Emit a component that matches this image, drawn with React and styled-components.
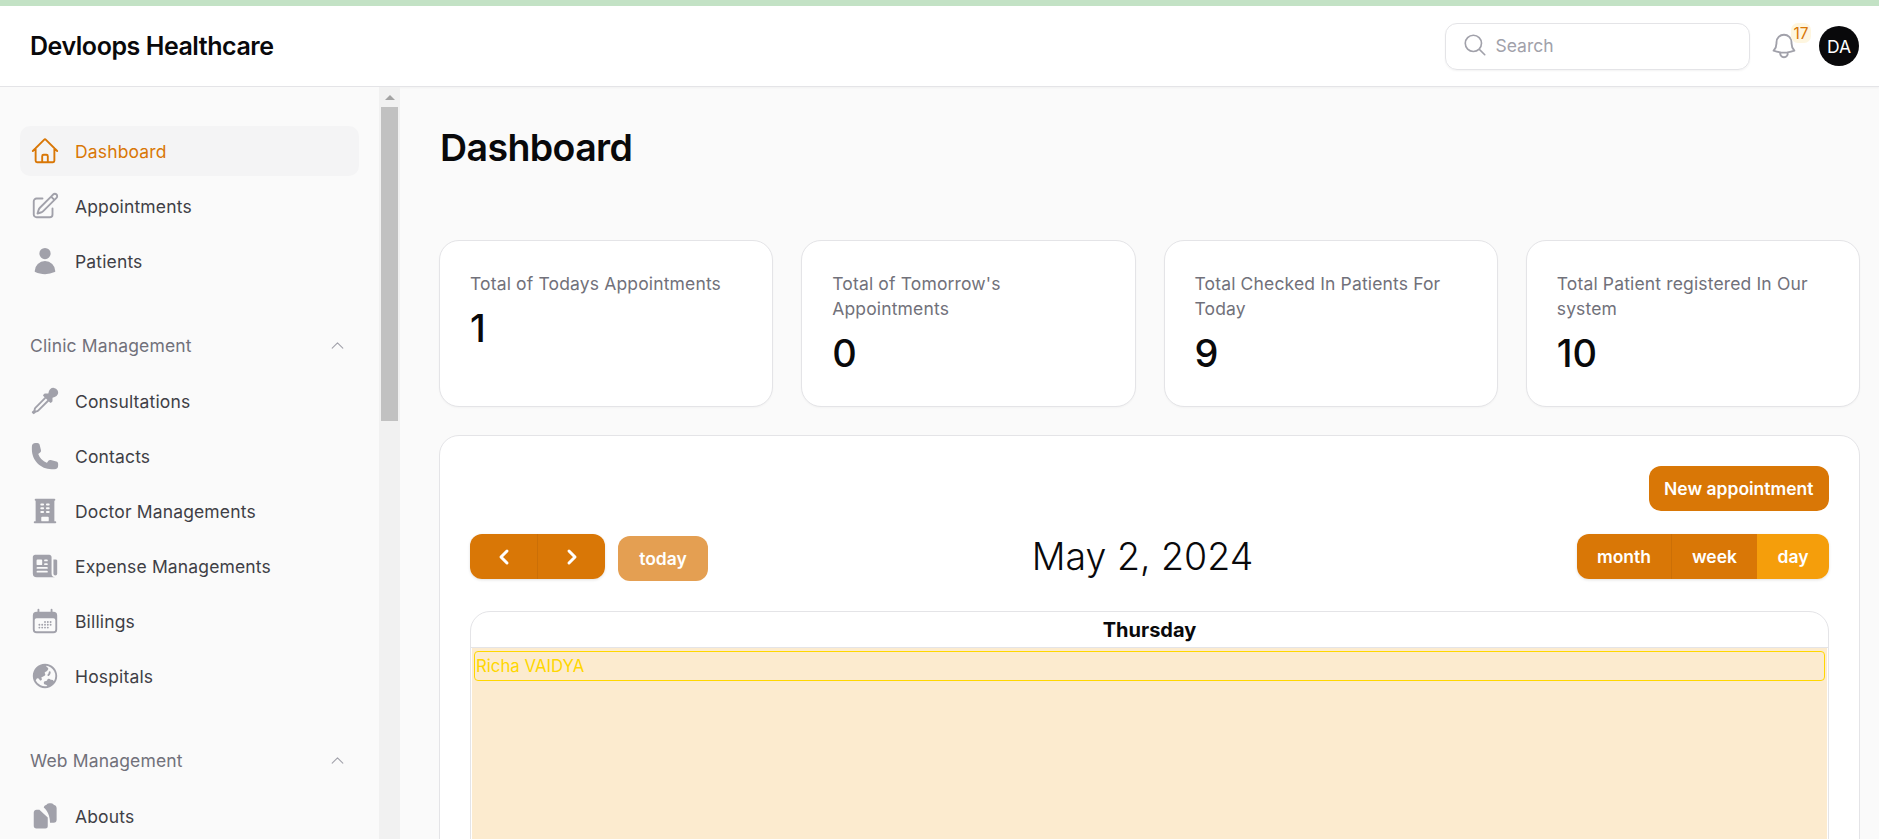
import React from "react";
import styled, { createGlobalStyle } from "styled-components";
import { ChevronLeft, ChevronRight } from "lucide-react";
import {
  HiOutlineHome,
  HiOutlinePencilSquare,
  HiUser,
  HiEyeDropper,
  HiPhone,
  HiBuildingOffice,
  HiNewspaper,
  HiCalendarDays,
  HiGlobeAsiaAustralia,
  HiOutlineChevronUp,
  HiOutlineBell,
  HiOutlineMagnifyingGlass,
} from "react-icons/hi2";

const GlobalStyle = createGlobalStyle`
  * { box-sizing: border-box; }
  html, body { margin: 0; height: 100%; overflow: hidden; }
  body {
    font-family: Inter, "Liberation Sans", sans-serif;
    background: #fafafa;
    color: #09090b;
  }
`;

// Structure generale
const Page = styled.div`
  height: 100vh;
  display: flex;
  flex-direction: column;
`;

const TopStripe = styled.div`
  height: 6px;
  flex: none;
  background: #c3e2c5;
`;

const Header = styled.header`
  height: 81px;
  flex: none;
  display: flex;
  align-items: center;
  justify-content: space-between;
  padding: 0 20px 0 30px;
  background: #fff;
  border-bottom: 1px solid #e4e4e7;
  box-shadow: 0 1px 2px rgba(0, 0, 0, 0.04);
`;

const Brand = styled.div`
  font-size: 25px;
  font-weight: 600;
  letter-spacing: -0.45px;
`;

const HeaderRight = styled.div`
  display: flex;
  align-items: center;
`;

const SearchBox = styled.div`
  width: 305px;
  height: 47px;
  display: flex;
  align-items: center;
  gap: 8px;
  padding: 0 0 2px 16px;
  border: 1.5px solid #e4e4e7;
  border-radius: 12px;
  box-shadow: 0 1px 2px rgba(0, 0, 0, 0.05);
  color: #a1a1aa;
  font-size: 17.5px;
  svg { font-size: 26px; }
`;

const BellWrap = styled.div`
  position: relative;
  width: 30px;
  height: 30px;
  margin: 0 20px 0 19.5px;
  color: #a1a1aa;
  svg { font-size: 30px; display: block; }
`;

const Badge = styled.span`
  position: absolute;
  top: -8px;
  right: -12px;
  width: 20px;
  height: 20px;
  display: flex;
  align-items: center;
  justify-content: center;
  border-radius: 7px;
  background: #fef6e0;
  color: #d97706;
  font-size: 15.5px;
`;

const Avatar = styled.div`
  width: 40px;
  height: 40px;
  display: flex;
  align-items: center;
  justify-content: center;
  border-radius: 50%;
  background: #09090b;
  color: #fff;
  font-size: 17.5px;
`;

const Body = styled.div`
  flex: 1;
  min-height: 0;
  display: flex;
`;

// Barre laterale
const Sidebar = styled.aside`
  width: 400px;
  flex: none;
  display: flex;
  overflow: hidden;
  background: #fafafa;
`;

const ScrollTrack = styled.div`
  width: 21px;
  flex: none;
  display: flex;
  flex-direction: column;
  align-items: center;
  background: #f1f1f1;
`;

const ScrollArrow = styled.div`
  width: 100%;
  height: 20px;
  display: flex;
  align-items: center;
  justify-content: center;
  &::before {
    content: "";
    border-left: 5px solid transparent;
    border-right: 5px solid transparent;
    border-bottom: 5px solid #a3a3a3;
  }
`;

const ScrollThumb = styled.div`
  width: 17px;
  height: 314px;
  background: #c1c1c1;
`;

const Nav = styled.nav`
  flex: 1;
  min-width: 0;
  padding: 39px 20px 0;
`;

const NavList = styled.div`
  display: flex;
  flex-direction: column;
  gap: 5px;
`;

const NavItem = styled.a`
  height: 50px;
  display: flex;
  align-items: center;
  gap: 15px;
  padding-left: 10px;
  border-radius: 10px;
  font-size: 17.5px;
  letter-spacing: 0.15px;
  color: ${(p) => (p.$active ? "#d97706" : "#3f3f46")};
  background: ${(p) => (p.$active ? "#f4f4f5" : "transparent")};
  svg {
    font-size: 30px;
    flex: none;
    color: ${(p) => (p.$active ? "#d97706" : "#a1a1aa")};
  }
`;

const SectionLabel = styled.div`
  height: 25px;
  margin: 47px 0 18px;
  display: flex;
  align-items: center;
  justify-content: space-between;
  padding: 0 13px 0 10px;
  font-size: 17.5px;
  letter-spacing: 0.15px;
  color: #71717a;
  svg { font-size: 17px; color: #a1a1aa; }
`;

// Contenu principal
const Main = styled.main`
  flex: 1;
  min-width: 0;
  overflow: hidden;
  padding: 38px 19px 0 39px;
`;

const Title = styled.h1`
  margin: 0 0 70px 1px;
  font-size: 37.5px;
  line-height: 45px;
  font-weight: 600;
  letter-spacing: -0.6px;
`;

const StatGrid = styled.div`
  display: grid;
  grid-template-columns: repeat(4, 1fr);
  gap: 28px;
  margin-bottom: 28px;
`;

const StatCard = styled.div`
  padding: 30px;
  background: #fff;
  border: 1px solid #e4e4e7;
  border-radius: 20px;
  box-shadow: 0 1px 2px rgba(0, 0, 0, 0.03);
`;

const StatLabel = styled.div`
  font-size: 17.5px;
  line-height: 25px;
  letter-spacing: 0.15px;
  color: #71717a;
`;

const StatValue = styled.div`
  margin-top: 10px;
  font-size: 38px;
  line-height: 45px;
  font-weight: 500;
  color: #09090b;
`;

const CalendarCard = styled.section`
  padding: 30px 30px 0;
  background: #fff;
  border: 1px solid #e4e4e7;
  border-radius: 20px;
`;

const CardActions = styled.div`
  display: flex;
  justify-content: flex-end;
  margin-bottom: 23px;
`;

const PrimaryButton = styled.button`
  height: 45px;
  padding: 0 15.5px;
  border: 0;
  border-radius: 12px;
  background: #d97706;
  color: #fff;
  font: 600 17.5px Inter, sans-serif;
`;

const Toolbar = styled.div`
  display: flex;
  align-items: flex-start;
  justify-content: space-between;
  margin-bottom: 30px;
`;

const ToolbarGroup = styled.div`
  display: flex;
  align-items: flex-start;
  gap: 13px;
`;

const ButtonGroup = styled.div`
  display: flex;
  height: 45px;
  border-radius: 12px;
  overflow: hidden;
  box-shadow: 0 1px 3px rgba(0, 0, 0, 0.12);
`;

const GroupButton = styled.button`
  width: ${(p) => p.$width}px;
  display: flex;
  align-items: center;
  justify-content: center;
  border: 0;
  border-left: ${(p) => (p.$divider ? "1px solid #cb6f06" : "0")};
  background: ${(p) => (p.$active ? "#f59e0b" : "#d97706")};
  color: #fff;
  font: 600 17.5px Inter, sans-serif;
`;

const TodayButton = styled.button`
  width: 90px;
  height: 45px;
  margin-top: 2px;
  border: 0;
  border-radius: 12px;
  background: #e49f52;
  color: #fff;
  font: 600 17.5px Inter, sans-serif;
`;

const DateTitle = styled.h2`
  margin: 0;
  font-size: 37.5px;
  line-height: 45px;
  font-weight: 300;
`;

const DayTable = styled.div`
  border: 1.5px solid #e4e4e7;
  border-radius: 20px;
  overflow: hidden;
`;

const DayHeader = styled.div`
  height: 36px;
  display: flex;
  align-items: center;
  justify-content: center;
  font-size: 20px;
  font-weight: 700;
  border-bottom: 1px solid #e4e4e7;
`;

const DayBody = styled.div`
  height: 900px;
  margin: 0 1px;
  padding: 3px 2px;
  background: #fcebcf;
`;

const EventBar = styled.div`
  height: 30px;
  display: flex;
  align-items: center;
  padding: 0 0 1px 1px;
  border: 1.5px solid #ffd700;
  border-radius: 4px;
  color: #ffd700;
  font-size: 16.8px;
`;

// Deux documents superposes, comme dans la maquette
const AboutsIcon = () => (
  <svg width="1em" height="1em" viewBox="0 0 24 24" fill="currentColor">
    <path d="M11 5.2C11.3 4 12 3.4 13 3.2A2.6 2.6 0 0 1 15.3 1.7h1.6a2.6 2.6 0 0 1 2.3 1.5c1.2.2 2.1 1.2 2.1 2.5V15a2.4 2.4 0 0 1-2.4 2.4H16c0-5.5-2-9.6-5-12.2Z" />
    <path d="M3 9.2C3 7.9 4 6.9 5.2 6.9H7.5l6.7 6.3V20a2 2 0 0 1-2 2H5.2A2.2 2.2 0 0 1 3 19.8V9.2Z" />
  </svg>
);

const clinicItems = [
  { label: "Consultations", icon: HiEyeDropper },
  { label: "Contacts", icon: HiPhone },
  { label: "Doctor Managements", icon: HiBuildingOffice },
  { label: "Expense Managements", icon: HiNewspaper },
  { label: "Billings", icon: HiCalendarDays },
  { label: "Hospitals", icon: HiGlobeAsiaAustralia },
];

const stats = [
  { label: "Total of Todays Appointments", value: 1 },
  { label: "Total of Tomorrow's Appointments", value: 0 },
  { label: "Total Checked In Patients For Today", value: 9 },
  { label: "Total Patient registered In Our system", value: 10 },
];

const App = () => {
  return (
    <Page>
      <GlobalStyle />
      <TopStripe />
      <Header>
        <Brand>Devloops Healthcare</Brand>
        <HeaderRight>
          <SearchBox>
            <HiOutlineMagnifyingGlass />
            <span>Search</span>
          </SearchBox>
          <BellWrap>
            <HiOutlineBell />
            <Badge>17</Badge>
          </BellWrap>
          <Avatar>DA</Avatar>
        </HeaderRight>
      </Header>
      <Body>
        <Sidebar>
          <Nav>
            <NavList>
              <NavItem $active>
                <HiOutlineHome />
                Dashboard
              </NavItem>
              <NavItem>
                <HiOutlinePencilSquare />
                Appointments
              </NavItem>
              <NavItem>
                <HiUser />
                Patients
              </NavItem>
            </NavList>
            <SectionLabel>
              Clinic Management
              <HiOutlineChevronUp />
            </SectionLabel>
            <NavList>
              {clinicItems.map(({ label, icon: Icon }) => (
                <NavItem key={label}>
                  <Icon />
                  {label}
                </NavItem>
              ))}
            </NavList>
            <SectionLabel>
              Web Management
              <HiOutlineChevronUp />
            </SectionLabel>
            <NavList>
              <NavItem>
                <AboutsIcon />
                Abouts
              </NavItem>
            </NavList>
          </Nav>
          <ScrollTrack>
            <ScrollArrow />
            <ScrollThumb />
          </ScrollTrack>
        </Sidebar>
        <Main>
          <Title>Dashboard</Title>
          <StatGrid>
            {stats.map((s) => (
              <StatCard key={s.label}>
                <StatLabel>{s.label}</StatLabel>
                <StatValue>{s.value}</StatValue>
              </StatCard>
            ))}
          </StatGrid>
          <CalendarCard>
            <CardActions>
              <PrimaryButton>New appointment</PrimaryButton>
            </CardActions>
            <Toolbar>
              <ToolbarGroup>
                <ButtonGroup>
                  <GroupButton $width={67}>
                    <ChevronLeft size={24} strokeWidth={3} />
                  </GroupButton>
                  <GroupButton $width={68} $divider>
                    <ChevronRight size={24} strokeWidth={3} />
                  </GroupButton>
                </ButtonGroup>
                <TodayButton>today</TodayButton>
              </ToolbarGroup>
              <DateTitle>May 2, 2024</DateTitle>
              <ButtonGroup>
                <GroupButton $width={94}>month</GroupButton>
                <GroupButton $width={86} $divider>week</GroupButton>
                <GroupButton $width={72} $active>day</GroupButton>
              </ButtonGroup>
            </Toolbar>
            <DayTable>
              <DayHeader>Thursday</DayHeader>
              <DayBody>
                <EventBar>Richa VAIDYA</EventBar>
              </DayBody>
            </DayTable>
          </CalendarCard>
        </Main>
      </Body>
    </Page>
  );
};

export default App;
